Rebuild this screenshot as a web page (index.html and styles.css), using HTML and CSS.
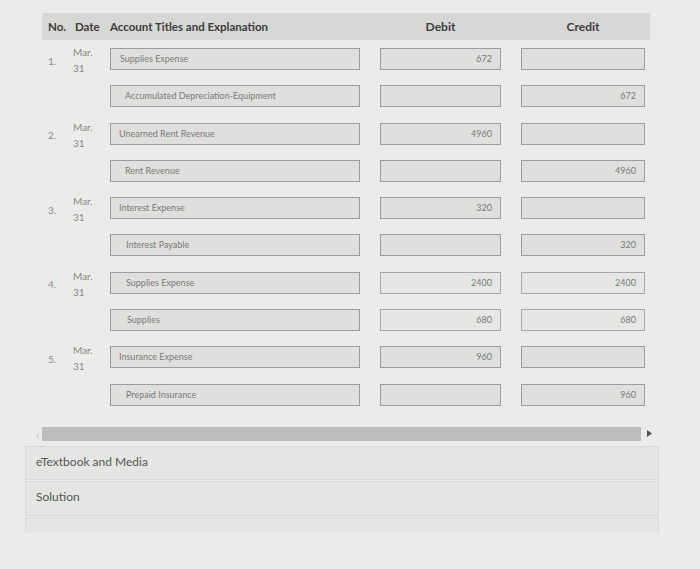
FILE: index.html
```html
<!DOCTYPE html>
<html>
<head>
<meta charset="utf-8">
<link rel="stylesheet" href="styles.css">
</head>
<body>
<div class="page">
  <div class="journal">
    <div class="grid hdr">
      <div class="h-no">No.</div>
      <div class="h-date">Date</div>
      <div class="h-acct">Account Titles and Explanation</div>
      <div class="h-amt">Debit</div>
      <div class="h-amt">Credit</div>
    </div>
    <div class="grid rows">
      <div class="no">1.</div><div class="date">Mar.<br>31</div>
      <div class="acct"><div class="box p9">Supplies Expense</div></div>
      <div class="amt"><div class="box num">672</div></div>
      <div class="amt cr"><div class="box num"></div></div>

      <div></div><div></div>
      <div class="acct"><div class="box p14">Accumulated Depreciation-Equipment</div></div>
      <div class="amt"><div class="box num"></div></div>
      <div class="amt cr"><div class="box num">672</div></div>

      <div class="no">2.</div><div class="date">Mar.<br>31</div>
      <div class="acct"><div class="box p8">Unearned Rent Revenue</div></div>
      <div class="amt"><div class="box num">4960</div></div>
      <div class="amt cr"><div class="box num"></div></div>

      <div></div><div></div>
      <div class="acct"><div class="box p14">Rent Revenue</div></div>
      <div class="amt"><div class="box num"></div></div>
      <div class="amt cr"><div class="box num">4960</div></div>

      <div class="no">3.</div><div class="date">Mar.<br>31</div>
      <div class="acct"><div class="box p8">Interest Expense</div></div>
      <div class="amt"><div class="box num">320</div></div>
      <div class="amt cr"><div class="box num"></div></div>

      <div></div><div></div>
      <div class="acct"><div class="box p15">Interest Payable</div></div>
      <div class="amt"><div class="box num"></div></div>
      <div class="amt cr"><div class="box num">320</div></div>

      <div class="no">4.</div><div class="date">Mar.<br>31</div>
      <div class="acct"><div class="box p15">Supplies Expense</div></div>
      <div class="amt"><div class="box num light">2400</div></div>
      <div class="amt cr"><div class="box num light">2400</div></div>

      <div></div><div></div>
      <div class="acct"><div class="box p16">Supplies</div></div>
      <div class="amt"><div class="box num light">680</div></div>
      <div class="amt cr"><div class="box num light">680</div></div>

      <div class="no">5.</div><div class="date">Mar.<br>31</div>
      <div class="acct"><div class="box p8">Insurance Expense</div></div>
      <div class="amt"><div class="box num">960</div></div>
      <div class="amt cr"><div class="box num"></div></div>

      <div></div><div></div>
      <div class="acct"><div class="box p15">Prepaid Insurance</div></div>
      <div class="amt"><div class="box num"></div></div>
      <div class="amt cr"><div class="box num">960</div></div>
    </div>
  </div>

  <div class="scrollbar">
    <span class="arrow-l">&#8249;</span>
    <div class="thumb"></div>
    <span class="arrow-r"><svg width="5" height="7" viewBox="0 0 5 7"><path d="M0 0 L5 3.5 L0 7 Z" fill="#555"/></svg></span>
  </div>

  <div class="panels">
    <div class="panel">eTextbook and Media</div>
    <div class="panel">Solution</div>
    <div class="panel stub"></div>
  </div>
</div>
</body>
</html>
```

FILE: styles.css
```css
html, body {
  margin: 0;
  padding: 0;
  background: #ebebe9;
}
body {
  font-family: Lato, "Open Sans", sans-serif;
  color: #777;
}
.page {
  width: 700px;
  height: 569px;
  padding-top: 13px;
  box-sizing: border-box;
  overflow: hidden;
}
.journal {
  margin-left: 42px;
  width: 608px;
}
.grid {
  display: grid;
  grid-template-columns: 24px 36px 252px 141px 144px;
  padding-left: 6px;
}
.hdr {
  height: 27px;
  background: #d7d7d5;
  align-items: center;
  font-weight: 700;
  font-size: 11.5px;
  color: #3c3c3c;
  white-space: nowrap;
}
.h-date { padding-left: 3px; }
.h-acct { padding-left: 2px; }
.h-amt { padding-left: 20px; text-align: center; font-size: 12px; }
.rows {
  margin-top: 8px;
  grid-auto-rows: 22px;
  row-gap: 15.3px;
}
.no {
  display: flex;
  align-items: center;
  font-size: 10px;
  color: #8a8a8a;
  padding-top: 3px;
}
.date {
  font-size: 10px;
  line-height: 16px;
  color: #8a8a8a;
  white-space: nowrap;
  padding-left: 1px;
  margin-top: -4px;
}
.acct { padding-left: 2px; }
.amt { padding-left: 20px; }
.box {
  height: 22px;
  box-sizing: border-box;
  border: 1px solid #9c9c9c;
  background: #dfdfdd;
  font-size: 9px;
  line-height: 20px;
  color: #7a7a7a;
  white-space: nowrap;
  overflow: hidden;
}
.amt .box { width: 121px; }
.amt.cr .box { width: 124px; }
.num { text-align: right; padding-right: 8px; }
.light { background: #e6e6e4; border-color: #a8a8a8; }
.p8 { padding-left: 8px; }
.p9 { padding-left: 9px; }
.p14 { padding-left: 14px; }
.p15 { padding-left: 15px; }
.p16 { padding-left: 16px; }

.scrollbar {
  margin: 21px 0 0 33px;
  width: 624px;
  height: 14px;
  display: flex;
  align-items: center;
}
.arrow-l {
  width: 9px;
  font-size: 10px;
  color: #aaa;
  text-align: center;
  line-height: 14px;
}
.thumb {
  width: 599px;
  height: 14px;
  background: #bdbdbb;
}
.arrow-r {
  flex: 1;
  display: flex;
  justify-content: center;
  align-items: center;
}
.panels {
  margin: 5px 0 0 25px;
  width: 634px;
}
.panel {
  height: 34px;
  box-sizing: border-box;
  border: 1px solid #d9d9d7;
  background: #e5e5e3;
  font-size: 12px;
  color: #555;
  padding-left: 10px;
  line-height: 30px;
  margin-bottom: 1px;
}
.panel + .panel { height: 35px; }
.panel.stub { height: 16px; border-bottom: none; }
```
